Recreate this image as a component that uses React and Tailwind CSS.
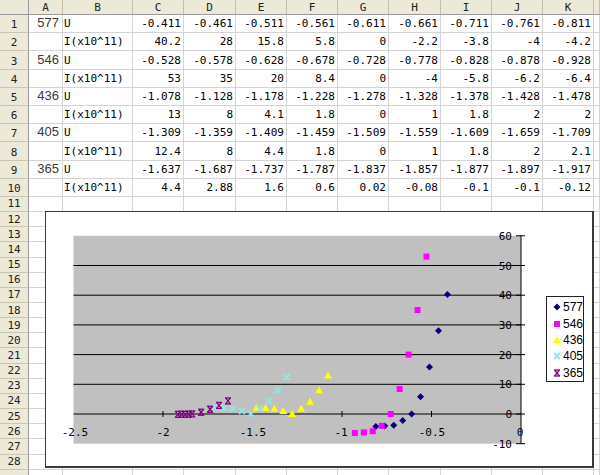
import React from "react";

const COLS = ["A", "B", "C", "D", "E", "F", "G", "H", "I", "J", "K", ""];

const DATA = [
  ["577", "U", "-0.411", "-0.461", "-0.511", "-0.561", "-0.611", "-0.661", "-0.711", "-0.761", "-0.811"],
  ["", "I(x10^11)", "40.2", "28", "15.8", "5.8", "0", "-2.2", "-3.8", "-4", "-4.2"],
  ["546", "U", "-0.528", "-0.578", "-0.628", "-0.678", "-0.728", "-0.778", "-0.828", "-0.878", "-0.928"],
  ["", "I(x10^11)", "53", "35", "20", "8.4", "0", "-4", "-5.8", "-6.2", "-6.4"],
  ["436", "U", "-1.078", "-1.128", "-1.178", "-1.228", "-1.278", "-1.328", "-1.378", "-1.428", "-1.478"],
  ["", "I(x10^11)", "13", "8", "4.1", "1.8", "0", "1", "1.8", "2", "2"],
  ["405", "U", "-1.309", "-1.359", "-1.409", "-1.459", "-1.509", "-1.559", "-1.609", "-1.659", "-1.709"],
  ["", "I(x10^11)", "12.4", "8", "4.4", "1.8", "0", "1", "1.8", "2", "2.1"],
  ["365", "U", "-1.637", "-1.687", "-1.737", "-1.787", "-1.837", "-1.857", "-1.877", "-1.897", "-1.917"],
  ["", "I(x10^11)", "4.4", "2.88", "1.6", "0.6", "0.02", "-0.08", "-0.1", "-0.1", "-0.12"],
];

const SERIES = [
  { name: "577", kind: "diamond", r: 0 },
  { name: "546", kind: "square", r: 2 },
  { name: "436", kind: "triangle", r: 4 },
  { name: "405", kind: "cross", r: 6 },
  { name: "365", kind: "star", r: 8 },
];

const X = (u) => 521 + u * 179;
const Y = (v) => 414 - v * 2.97;

function Marker({ kind, x, y }) {
  switch (kind) {
    case "diamond":
      return <polygon points={`${x},${y - 3.5} ${x + 3.5},${y} ${x},${y + 3.5} ${x - 3.5},${y}`} fill="#000080" />;
    case "square":
      return <rect x={x - 3} y={y - 3} width="6" height="6" fill="#ff00ff" />;
    case "triangle":
      return <polygon points={`${x},${y - 4} ${x + 4},${y + 3} ${x - 4},${y + 3}`} fill="#ffff00" />;
    case "cross":
      return (
        <g stroke="#98e2e2" strokeWidth="2">
          <line x1={x - 3} y1={y - 3} x2={x + 3} y2={y + 3} />
          <line x1={x - 3} y1={y + 3} x2={x + 3} y2={y - 3} />
        </g>
      );
    case "star":
      return (
        <g stroke="#800080" strokeWidth="1.3">
          <line x1={x - 2.5} y1={y - 3} x2={x + 2.5} y2={y + 3} />
          <line x1={x - 2.5} y1={y + 3} x2={x + 2.5} y2={y - 3} />
          <line x1={x - 3} y1={y - 3} x2={x + 3} y2={y - 3} />
          <line x1={x - 3} y1={y + 3} x2={x + 3} y2={y + 3} />
        </g>
      );
    default:
      return null;
  }
}

function Chart() {
  const gridVals = [50, 40, 30, 20, 10];
  const yTicks = [60, 50, 40, 30, 20, 10, 0, -10];
  const xTicks = [-2, -1.5, -1, -0.5];
  const xLabels = [
    ["-2.5", 75],
    ["-2", 163],
    ["-1.5", 253],
    ["-1", 341],
    ["-0.5", 432],
    ["0", 520],
  ];
  return (
    <div className="absolute left-[45px] top-[211px] w-[549px] h-[257px] bg-white border-l border-t border-r-2 border-b-2 border-[#3a3a3a]">
      <svg width="546" height="254" viewBox="46 212 546 254" className="block">
        <rect x="73.5" y={Y(60)} width={521 - 73.5} height={Y(-10) - Y(60)} fill="#c0c0c0" />
        {gridVals.map((v) => (
          <line key={v} x1="73.5" x2="521" y1={Y(v)} y2={Y(v)} stroke="#000" strokeWidth="1" />
        ))}
        <line x1="73.5" x2="521" y1={Y(0)} y2={Y(0)} stroke="#000" strokeWidth="1" />
        {xTicks.map((u) => (
          <line key={u} x1={X(u)} x2={X(u)} y1={Y(0) - 3} y2={Y(0) + 3} stroke="#000" />
        ))}
        <line x1="521" x2="521" y1={Y(60)} y2={Y(-10)} stroke="#000" />
        {yTicks.map((v) => (
          <line key={v} x1="516" x2="525" y1={Y(v)} y2={Y(v)} stroke="#000" />
        ))}
        <g fontFamily="'DejaVu Sans Mono', monospace" fontSize="11" fill="#000">
          {yTicks.map((v) => (
            <text key={v} x="512" y={Y(v) + 4} textAnchor="end">
              {String(v)}
            </text>
          ))}
          {xLabels.map(([t, x]) => (
            <text key={t} x={x} y="436" textAnchor="middle">
              {t}
            </text>
          ))}
        </g>
        {SERIES.map((s) =>
          DATA[s.r].slice(2).map((u, i) => (
            <Marker key={s.name + i} kind={s.kind} x={X(parseFloat(u))} y={Y(parseFloat(DATA[s.r + 1][i + 2]))} />
          ))
        )}
      </svg>
      <div className="absolute left-[500px] top-[84px] w-[38px] h-[86px] bg-white border border-[#222] flex flex-col pt-[2px]">
        {SERIES.map((s) => (
          <div key={s.name} className="h-[17px] flex items-center gap-[1px] pl-[5px]">
            <svg width="10" height="10" viewBox="-5 -5 10 10" className="shrink-0">
              <Marker kind={s.kind} x={0} y={0} />
            </svg>
            <span className="text-[12px] leading-none text-black font-['Liberation_Sans',Arial,sans-serif]">{s.name}</span>
          </div>
        ))}
      </div>
    </div>
  );
}

export default function App() {
  const rowCount = 29;
  const rows = [];
  for (let r = 1; r <= rowCount; r++) {
    const d = DATA[r - 1];
    const tall = r <= 10;
    rows.push(
      <div
        key={"rh" + r}
        className={`bg-[#ece9d8] border-r border-r-[#9a9a9a] border-b border-b-[#c9c5b2] flex justify-center ${tall ? "items-end pb-[1px]" : "items-center"} text-[11px] leading-[13px] text-[#222]`}
      >
        {r < 29 ? r : ""}
      </div>
    );
    for (let c = 0; c < 12; c++) {
      const v = d && c < 11 ? d[c] : "";
      let cls = "border-r border-b border-[#d4d4d4] flex items-end pb-[2px] overflow-hidden whitespace-nowrap ";
      let content = v;
      if (c === 0) {
        cls += "justify-end pr-[3px]";
        content = v ? (
          <span className="text-[13px] leading-[14px] text-[#3a3a3a] font-['Liberation_Sans',Arial,sans-serif]">{v}</span>
        ) : null;
      } else if (c === 1) {
        cls += "justify-start pl-[1px] text-[11px] leading-[13px]";
      } else {
        cls += "justify-end pr-[2px] text-[11px] leading-[13px]";
      }
      rows.push(
        <div key={r + "-" + c} className={cls}>
          {content}
        </div>
      );
    }
  }

  return (
    <div className="relative w-[600px] h-[475px] overflow-hidden bg-white text-black font-['DejaVu_Sans_Mono',monospace]">
      <div className="grid grid-cols-[29px_34px_70px_51px_52px_51px_51px_51px_52px_51px_51px_51px_1fr] grid-rows-[15px_repeat(10,18.2px)_repeat(19,15.17px)]">
        <div className="bg-[#ece9d8] border-r border-b border-[#9a9a9a]" />
        {COLS.map((c, i) => (
          <div
            key={"ch" + i}
            className="bg-[#ece9d8] border-r border-r-[#c3bfab] border-b border-b-[#9a9a9a] flex items-center justify-center text-[11px] leading-[13px] text-[#222]"
          >
            {c}
          </div>
        ))}
        {rows}
      </div>
      <Chart />
    </div>
  );
}
